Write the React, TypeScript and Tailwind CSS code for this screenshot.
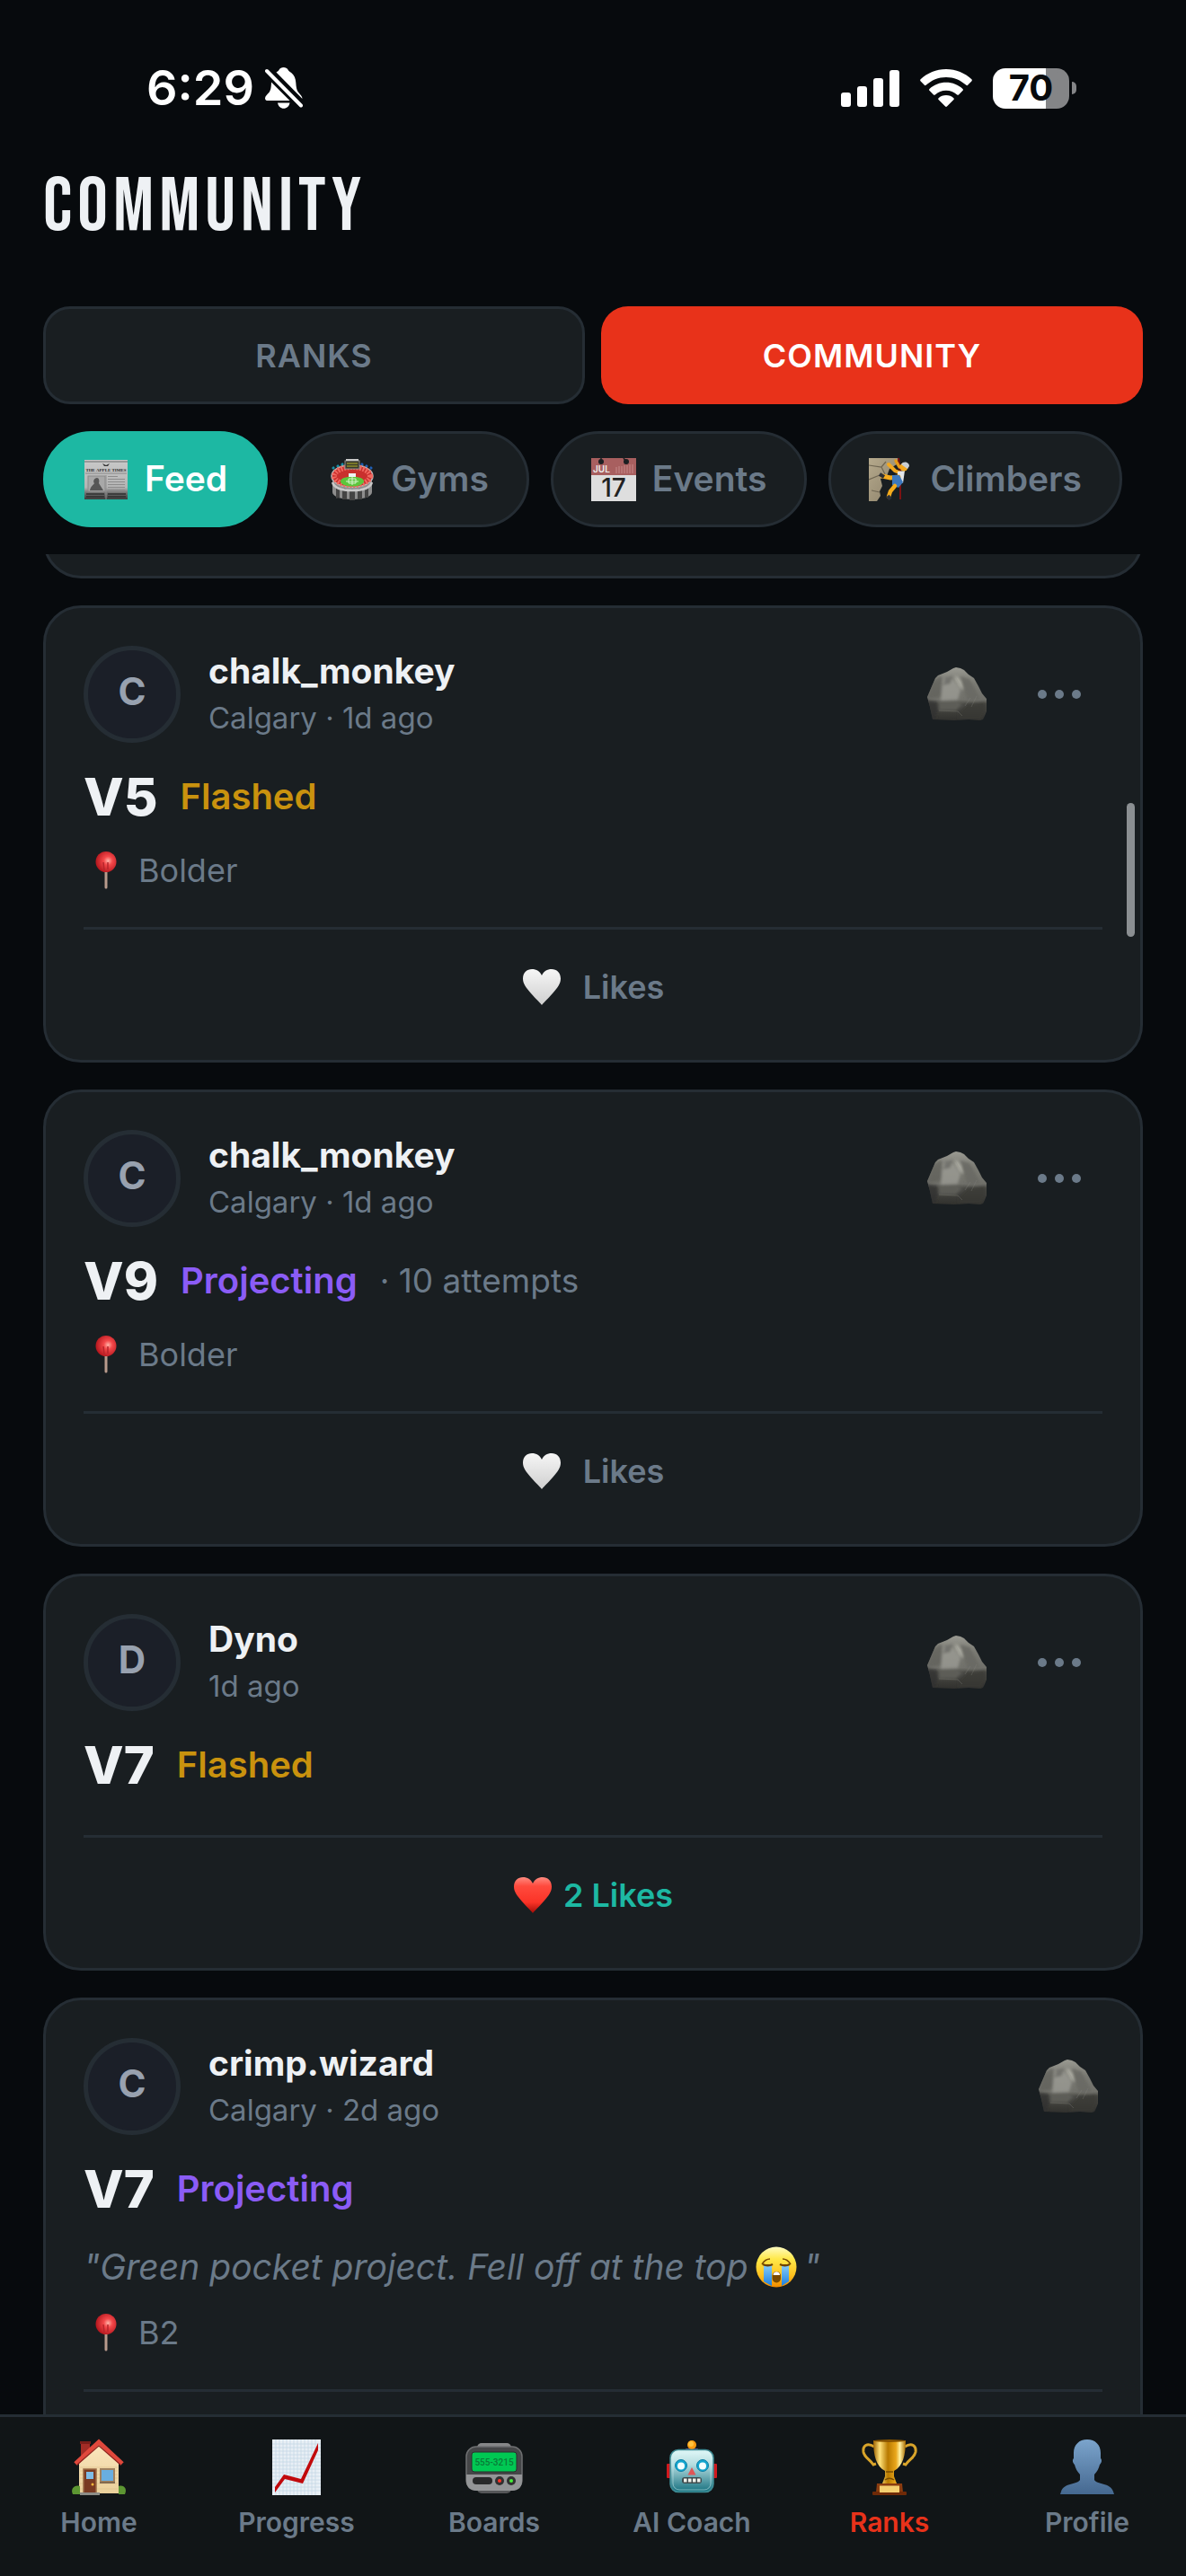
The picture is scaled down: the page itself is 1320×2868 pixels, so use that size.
import type { ReactNode } from 'react';

type Status = 'Flashed' | 'Projecting';

interface Post {
  id: number;
  user: string;
  meta: string;
  grade: string;
  status: Status;
  attempts?: number;
  note?: string;
  gym?: string;
  likes: number;
  hasMenu: boolean;
}

const posts: Post[] = [
  { id: 1, user: 'chalk_monkey', meta: 'Calgary · 1d ago', grade: 'V5', status: 'Flashed', gym: 'Bolder', likes: 0, hasMenu: true },
  { id: 2, user: 'chalk_monkey', meta: 'Calgary · 1d ago', grade: 'V9', status: 'Projecting', attempts: 10, gym: 'Bolder', likes: 0, hasMenu: true },
  { id: 3, user: 'Dyno', meta: '1d ago', grade: 'V7', status: 'Flashed', likes: 2, hasMenu: true },
  { id: 4, user: 'crimp.wizard', meta: 'Calgary · 2d ago', grade: 'V7', status: 'Projecting', note: 'Green pocket project. Fell off at the top', gym: 'B2', likes: 0, hasMenu: false },
];

/* Gradients shared by all the icons */
function IconDefs() {
  return (
    <svg className="absolute size-0" aria-hidden="true">
      <defs>
        <linearGradient id="rock" x1="0" y1="0" x2="0" y2="1">
          <stop offset="0" stopColor="#9a9a92" />
          <stop offset="0.3" stopColor="#7a7a73" />
          <stop offset="0.6" stopColor="#70706a" />
          <stop offset="0.68" stopColor="#4b4b46" />
          <stop offset="1" stopColor="#2f2f2c" />
        </linearGradient>
        <filter id="rockSoft" x="-20%" y="-20%" width="140%" height="140%">
          <feGaussianBlur stdDeviation="1.5" />
        </filter>
        <clipPath id="rockShape">
          <path d="M7 33l6-14 3-7 3-3 10-4 7-4 3-1 5 1 4 2 5 5 6 4 5 9 4 8 5 6v14l-2 5-2 4-3 1-13-1-16 1-24-1-3-14z" />
        </clipPath>
        <radialGradient id="pin" cx="0.6" cy="0.45" r="0.6">
          <stop offset="0" stopColor="#ffb3a8" />
          <stop offset="0.35" stopColor="#f4484a" />
          <stop offset="1" stopColor="#b3161d" />
        </radialGradient>
        <linearGradient id="heartWhite" x1="0" y1="0" x2="0" y2="1">
          <stop offset="0" stopColor="#f6f6f6" />
          <stop offset="1" stopColor="#cfcfcf" />
        </linearGradient>
        <linearGradient id="heartRed" x1="0" y1="0" x2="0" y2="1">
          <stop offset="0" stopColor="#ff8b80" />
          <stop offset="0.25" stopColor="#ff4a3d" />
          <stop offset="0.7" stopColor="#fb3327" />
          <stop offset="1" stopColor="#a30d08" />
        </linearGradient>
        <linearGradient id="face" x1="0" y1="0" x2="0" y2="1">
          <stop offset="0" stopColor="#fffbc0" />
          <stop offset="0.3" stopColor="#ffe94a" />
          <stop offset="0.7" stopColor="#ffc21f" />
          <stop offset="1" stopColor="#f08a00" />
        </linearGradient>
        <linearGradient id="tears" x1="0" y1="0" x2="0" y2="1">
          <stop offset="0" stopColor="#8cd0f8" />
          <stop offset="1" stopColor="#1c7fe0" />
        </linearGradient>
        <linearGradient id="robot" x1="0" y1="0" x2="0" y2="1">
          <stop offset="0" stopColor="#e2f8f8" />
          <stop offset="0.35" stopColor="#b5dde0" />
          <stop offset="1" stopColor="#16707f" />
        </linearGradient>
        <linearGradient id="gold" x1="0" y1="0" x2="1" y2="0">
          <stop offset="0" stopColor="#9c6100" />
          <stop offset="0.2" stopColor="#ffe27a" />
          <stop offset="0.45" stopColor="#b87a00" />
          <stop offset="0.7" stopColor="#eaa71b" />
          <stop offset="0.82" stopColor="#fff0a0" />
          <stop offset="1" stopColor="#a86b00" />
        </linearGradient>
        <linearGradient id="bust" x1="0" y1="0" x2="0" y2="1">
          <stop offset="0" stopColor="#7ba4cc" />
          <stop offset="1" stopColor="#456890" />
        </linearGradient>
        <linearGradient id="paper" x1="0" y1="0" x2="0" y2="1">
          <stop offset="0" stopColor="#c9c9c9" />
          <stop offset="0.7" stopColor="#b4b4b4" />
          <stop offset="0.85" stopColor="#6b6b6b" />
          <stop offset="1" stopColor="#3c3c3c" />
        </linearGradient>
        <linearGradient id="stone" x1="0" y1="0" x2="1" y2="1">
          <stop offset="0" stopColor="#b5a98c" />
          <stop offset="1" stopColor="#8b8069" />
        </linearGradient>
        <linearGradient id="wall" x1="0" y1="0" x2="0" y2="1">
          <stop offset="0" stopColor="#fbe6bd" />
          <stop offset="1" stopColor="#ead09b" />
        </linearGradient>
      </defs>
    </svg>
  );
}

function BellOffIcon() {
  return (
    <svg viewBox="0 0 42 46" className="h-[46px] w-[42px]" fill="#fff" aria-hidden="true">
      <path d="M12.500 5.500C14 4.600 15 4 15.600 2.800 16.600 1 18.400 0 20.600 0s4 1 5 2.800c.7 1.300 2 2 3.600 3.200C32.600 8.600 34 12.500 34.300 17c.3 5.200 1 8.400 2.600 10.600 2.200 2.900 4.600 4.600 4.600 7.400z" />
      <path d="M7 16.500C6.800 22 6.500 25 4.600 27.700 2.400 30.300 0 32 0 34.400 0 36 1.300 37 3.300 37h24.200z" />
      <path d="M14 39.500h13.500c-.6 3.800-3.400 6.300-6.800 6.300S14.600 43.300 14 39.500z" />
      <path d="M2 4l38 38.500" stroke="#070a0d" strokeWidth="8.500" />
      <path d="M2 4l38 38.500" stroke="#fff" strokeWidth="4" strokeLinecap="round" />
    </svg>
  );
}

function SignalIcon() {
  return (
    <svg viewBox="0 0 65 41" className="h-[41px] w-[65px]" fill="#fff" aria-hidden="true">
      <rect x="0" y="25" width="11" height="16" rx="3" />
      <rect x="18" y="18" width="11" height="23" rx="3" />
      <rect x="36" y="9" width="11" height="32" rx="3" />
      <rect x="54" y="0" width="11" height="41" rx="3" />
    </svg>
  );
}

function WifiIcon() {
  return (
    <svg viewBox="0 0 58 42" className="h-[42px] w-[58px]" fill="#fff" aria-hidden="true">
      <path d="M29 0C40 0 50 4.300 57.400 11.300c.6.600.6 1.300.1 1.900l-4.400 4.600c-.5.500-1.200.5-1.700 0C45.300 12.200 37.600 8.900 29 8.900S12.700 12.200 6.600 17.800c-.5.500-1.200.5-1.700 0L.5 13.200c-.5-.6-.5-1.300.1-1.900C8 4.300 18 0 29 0z" />
      <path d="M29 14.700c7.200 0 13.600 2.700 18.500 7.200.6.600.6 1.300.1 1.900l-4.600 4.600c-.5.500-1.200.5-1.800 0-3.300-3-7.500-4.700-12.200-4.700s-8.900 1.700-12.200 4.700c-.6.500-1.300.5-1.800 0l-4.600-4.600c-.5-.6-.5-1.300.1-1.900 4.900-4.500 11.300-7.200 18.500-7.200z" />
      <path d="M29 29c3.300 0 6.200 1.200 8.400 3.200.6.600.6 1.200 0 1.800l-7.500 7.500c-.5.500-1.300.5-1.800 0L20.600 34c-.6-.6-.6-1.200 0-1.800C22.800 30.200 25.700 29 29 29z" />
    </svg>
  );
}

function StatusBar() {
  return (
    <div className="flex h-[142px] items-center justify-between pt-[54px] pr-[122px] pl-[163px]">
      <div className="flex items-center gap-3">
        <span className="text-[54px] leading-none font-semibold text-white">6:29</span>
        <BellOffIcon />
      </div>
      <div className="flex items-center gap-[23px]">
        <SignalIcon />
        <WifiIcon />
        <div className="flex items-center gap-[3px]">
          <div className="flex h-[45px] w-[85px] items-center justify-center rounded-[14px] bg-linear-to-r from-white from-70% to-[#848587] to-70%">
            <span className="text-[40px] leading-none font-bold text-[#070a0d]">70</span>
          </div>
          <div className="h-[14px] w-[5px] rounded-r-full bg-[#848587]" />
        </div>
      </div>
    </div>
  );
}

function NewspaperIcon() {
  return (
    <svg viewBox="0 0 50 48" className="h-12 w-[50px]" aria-hidden="true">
      <rect x="1" y="2" width="48" height="44" fill="url(#paper)" />
      <path d="M1 4h48" stroke="#8a8a8a" strokeWidth="1.500" />
      <path d="M21 6l4 2 4-2-2 3h-4z" fill="#333" />
      <text x="25" y="15" fontSize="5" fontWeight="700" fontFamily="Liberation Serif, serif" textAnchor="middle" fill="#2b2b2b">THE APPLE TIMES</text>
      <path d="M2 17h46" stroke="#888" />
      <rect x="5" y="20" width="19" height="17" fill="#a8a8a8" stroke="#8a8a8a" />
      <path d="M7 36c1-5 4-6 5-8-2-2 0-6 3-6 2 0 3 3 2 6l5 8z" fill="#565656" />
      <path d="M27 20.500h11M27 23.500h19M27 26.500h19M27 29.500h19M27 32.500h19M27 35.500h19" stroke="#8c8c8c" strokeWidth="1.200" />
      <path d="M3 40h20M27 40h20M3 43h20M27 43h20" stroke="#303030" strokeWidth="1.500" />
      <path d="M25 19v27" stroke="#8f8f8f" />
    </svg>
  );
}

function StadiumIcon() {
  return (
    <svg viewBox="0 0 50 48" className="h-12 w-[50px]" aria-hidden="true">
      <path d="M3 12l2-2M8 10l2-2M13 8l2-2" stroke="#1890a8" strokeWidth="2.500" />
      <path d="M47 12l-2-2M42 10l-2-2M37 8l-2-2" stroke="#1f5fb5" strokeWidth="2.500" />
      <path d="M3 20v18c0 5 10 8 22 8s22-3 22-8V20z" fill="#8d8d8d" />
      <path d="M7 45V34c0-3 4-3 4 0v10zM14 46V36c0-3 5-3 5 0v10zM22 47V37c0-3 6-3 6 0v10zM31 46V36c0-3 5-3 5 0v10zM39 44V34c0-3 4-3 4 0v10z" fill="#444" />
      <path d="M3 27c2 6 11 9 22 9s20-3 22-9" fill="none" stroke="#c9c9c9" strokeWidth="2.500" />
      <ellipse cx="25" cy="20" rx="23" ry="12.500" fill="#c9302d" stroke="#b9b9b9" strokeWidth="1.500" />
      <ellipse cx="25" cy="20" rx="20" ry="10" fill="none" stroke="#f2685f" strokeWidth="6" strokeDasharray="2 1.500" />
      <ellipse cx="25" cy="26" rx="13" ry="5.500" fill="#5cc63c" />
      <path d="M18 26h14M25 21v9M21 23h8v5h-8z" stroke="#d6f5cc" fill="none" />
      <rect x="17" y="3" width="16" height="9" fill="#3a3a2a" stroke="#8b8b8b" />
      <path d="M19 6h12M19 9h12" stroke="#8f8c2a" strokeWidth="1.500" />
      <path d="M18 2h14" stroke="#c8c8c8" strokeWidth="2" />
      <rect x="21" y="17" width="8" height="4" fill="#eef3f3" />
    </svg>
  );
}

function CalendarIcon() {
  return (
    <svg viewBox="0 0 50 48" className="h-12 w-[50px] overflow-visible" aria-hidden="true">
      <rect width="50" height="48" fill="#dedede" />
      <rect width="50" height="19" fill="#a85f5f" />
      <circle cx="11" cy="4" r="3" fill="#1c1f22" />
      <circle cx="39" cy="4" r="3" fill="#1c1f22" />
      <path d="M11 0v4M36 0l3 4" stroke="#1c1f22" strokeWidth="1.500" />
      <text x="2" y="16" fontSize="10" fontFamily="Inter, sans-serif" fill="#eee">JUL</text>
      <path d="M28 10v7M31 9v8M34 9v8M37 8v9M40 8v9M43 7v10M46 7v10" stroke="#c78b8b" />
      <text x="25" y="43" fontSize="28" fontWeight="500" fontFamily="Inter, sans-serif" textAnchor="middle" fill="#222">17</text>
    </svg>
  );
}

function ClimberIcon() {
  return (
    <svg viewBox="0 0 50 48" className="h-12 w-[50px]" aria-hidden="true">
      <path d="M0 0h33l-2 7-8 5-3 8-7 3 2 8-3 6 1 5-4 6H0z" fill="url(#stone)" />
      <path d="M0 8l14 2 5-6M0 24l12-5M3 36l9 2M14 10l4 8" stroke="#6f6652" fill="none" strokeWidth="1.200" />
      <path d="M33 0l2 16v30" stroke="#7d1212" strokeWidth="2" fill="none" />
      <path d="M22 7l7 7 7 3" stroke="#f2a71f" strokeWidth="4" strokeLinecap="round" fill="none" />
      <path d="M30 3l4 7" stroke="#e69a18" strokeWidth="3.500" strokeLinecap="round" />
      <path d="M32 15l8-1-2 14-6-4z" fill="#e3e6ea" />
      <path d="M33 21l-9 1-9-2" stroke="#f5ab1d" strokeWidth="5" strokeLinecap="round" fill="none" />
      <path d="M26 19h8l4 8-5 6-7-3z" fill="#3d78bd" />
      <path d="M29 31l-5 6-2 6" stroke="#f5ab1d" strokeWidth="4.500" strokeLinecap="round" fill="none" />
      <path d="M12 18l5 3M21 42l3 4" stroke="#2b2f38" strokeWidth="4" />
      <circle cx="39" cy="10" r="4.500" fill="#f2a71f" />
      <path d="M36 7c2-4 9-3 9 2l-2 3z" fill="#c9ced3" />
    </svg>
  );
}

function RockIcon() {
  return (
    <svg viewBox="0 0 78 60" className="h-[60px] w-[78px] shrink-0" role="img" aria-label="Boulder">
      <g clipPath="url(#rockShape)">
        <rect width="78" height="60" fill="url(#rock)" />
        <g filter="url(#rockSoft)">
          <path d="M12 16l10-7 3 6-2 18-16 2z" fill="#5c5c56" opacity="0.600" />
          <path d="M24 14l6-4 8 6 6 9-3 11-19 1z" fill="#a0a098" opacity="0.700" />
          <path d="M27 11l8-1-2 8-8 2z" fill="#5c5c56" opacity="0.600" />
          <path d="M39 9l6 7 3 10-5-4-5-9z" fill="#b2b2a9" opacity="0.900" />
          <path d="M44 10l10 3 8 14 4 9-14 1-5-13z" fill="#686862" opacity="0.800" />
          <path d="M20 38h20l6 3-7 7H20z" fill="#63635d" opacity="0.800" />
          <path d="M6 36l12 2 1 10-3 11H9z" fill="#31312e" opacity="0.700" />
          <path d="M42 51l10-10 20-2v10l-5 9H42z" fill="#363632" opacity="0.700" />
        </g>
        <path d="M38 10l4 7 4 8M55 34l-6 9M62 32l-6 12M20 48l21 1 5 5" stroke="#8c8c83" opacity="0.300" fill="none" />
      </g>
    </svg>
  );
}

function PinIcon() {
  return (
    <svg viewBox="0 0 48 44" className="h-11 w-12" aria-hidden="true">
      <path d="M25 22v19" stroke="#b89a8c" strokeWidth="3" strokeLinecap="round" />
      <circle cx="25" cy="12.500" r="11.500" fill="url(#pin)" />
      <path d="M22 13l1 9M27 13v8" stroke="#b7252b" strokeWidth="1.500" />
    </svg>
  );
}

function HeartIcon({ liked }: { liked: boolean }) {
  return (
    <svg viewBox="0 0 44 42" className="h-[42px] w-11" aria-hidden="true">
      <path
        d="M22 41C19 37 15 34 10 28 4 21 1 17 1 11.500 1 5 5.500 1 11 1c5 0 9 2.500 11 7 2-4.500 6-7 11-7 5.500 0 10 4 10 10.500C43 17 40 21 34 28c-5 6-9 9-12 13z"
        fill={liked ? 'url(#heartRed)' : 'url(#heartWhite)'}
      />
    </svg>
  );
}

function CryingIcon() {
  return (
    <svg viewBox="0 0 46 46" className="mx-2 inline-block size-[46px] align-[-9px]" role="img" aria-label="crying">
      <circle cx="23" cy="23" r="22.500" fill="url(#face)" />
      <path d="M9 20h9v24L9 39zM29 20h8v19l-8 5z" fill="url(#tears)" />
      <path d="M7 20c3-5 6-6 9-6M39 20c-3-5-6-6-9-6" stroke="#7b4c00" strokeWidth="1.500" fill="none" />
      <path d="M8 20c3 1.500 8 1.500 11 0M27 20c3 1.500 8 1.500 11 0" stroke="#6d4200" strokeWidth="2.500" fill="none" />
      <rect x="18.500" y="28" width="9.500" height="12.500" rx="4.700" fill="#7a4a00" />
      <path d="M19.500 32c0-5 7.500-5 7.500 0z" fill="#fff" />
    </svg>
  );
}

function HouseIcon() {
  return (
    <svg viewBox="0 0 64 64" className="size-16" aria-hidden="true">
      <rect x="12" y="4" width="10" height="18" fill="#a32c26" />
      <rect x="11" y="3" width="12" height="3" fill="#7a1e1a" />
      <path d="M10 26L32 6l22 20v35H10z" fill="url(#wall)" />
      <path d="M11 32h42M11 36h42M11 40h42M11 44h42M11 50h42M11 56h42" stroke="#e0c590" strokeWidth="0.800" />
      <path d="M6 28L32 4l26 24" stroke="#e0483c" strokeWidth="5" fill="none" />
      <path d="M8 29L32 8l24 21" stroke="#8f231d" strokeWidth="1.200" fill="none" />
      <rect x="15" y="34" width="14" height="27" fill="#7a3a22" stroke="#9b6b46" strokeWidth="1.500" />
      <rect x="18" y="37" width="8" height="8" fill="#7fbce6" />
      <circle cx="25" cy="51" r="1.500" fill="#f3b63c" />
      <rect x="34" y="34" width="15" height="14" fill="#69aee0" stroke="#a08260" strokeWidth="2" />
      <path d="M33 49h17" stroke="#826a4e" strokeWidth="2" />
      <rect x="11" y="60" width="22" height="3" fill="#8d8d88" />
      <path d="M3 62c-3-6 2-11 8-9v9zM61 62c3-6-1-11-7-9v9z" fill="#5d9632" />
    </svg>
  );
}

function ChartIcon() {
  return (
    <svg viewBox="0 0 64 64" className="size-16" aria-hidden="true">
      <rect x="5" y="1" width="54" height="62" fill="#e8eff5" />
      <path
        d="M9 1v62M13 1v62M17 1v62M21 1v62M25 1v62M29 1v62M33 1v62M37 1v62M41 1v62M45 1v62M49 1v62M53 1v62M5 6h54M5 10h54M5 14h54M5 18h54M5 22h54M5 26h54M5 30h54M5 34h54M5 38h54M5 42h54M5 46h54M5 50h54M5 54h54M5 58h54"
        stroke="#c5d8e6"
        strokeWidth="0.800"
      />
      <path d="M8 60V54l10-14 19 5L56 5v8L39 50l-20-5z" fill="#c1090c" />
    </svg>
  );
}

function PagerIcon() {
  return (
    <svg viewBox="0 0 64 64" className="size-16" aria-hidden="true">
      <rect x="13" y="5" width="38" height="12" rx="5" fill="#868789" />
      <rect x="13" y="48" width="38" height="13" rx="5" fill="#555658" />
      <rect x="1" y="9" width="62" height="48" rx="11" fill="#454648" stroke="#6e6f71" strokeWidth="1.500" />
      <path d="M1 40h62v7c0 7-4 11-11 11H12C5 58 1 54 1 47z" fill="#949597" />
      <rect x="7" y="15" width="50" height="22" rx="3" fill="#00c853" stroke="#2b2c2d" />
      <text x="32" y="30" fontSize="10" fontWeight="500" fontFamily="Roboto, sans-serif" textAnchor="middle" fill="#0a7a38">555-3215</text>
      <rect x="8" y="43" width="22" height="8" rx="4" fill="#28292a" />
      <circle cx="38" cy="47" r="5" fill="#303132" />
      <circle cx="38" cy="47" r="2" fill="#ff3328" />
      <circle cx="51" cy="47" r="5" fill="#303132" />
      <circle cx="51" cy="47" r="2" fill="#45f03a" />
    </svg>
  );
}

function RobotIcon() {
  return (
    <svg viewBox="0 0 64 64" className="size-16" aria-hidden="true">
      <path d="M25 11h14l-2 5H27z" fill="#5d4a86" />
      <circle cx="32" cy="7" r="5" fill="#f99b10" />
      <circle cx="31" cy="6" r="3" fill="#ffc23e" />
      <rect x="4" y="28" width="6" height="16" rx="1" fill="#d1191e" />
      <rect x="54" y="28" width="6" height="16" rx="1" fill="#d1191e" />
      <rect x="8" y="12.500" width="48" height="47" rx="9" fill="url(#robot)" stroke="#3f8b94" strokeWidth="1.500" />
      <rect x="11" y="15" width="42" height="42" rx="7" fill="none" stroke="#d6f4f4" opacity="0.500" />
      <circle cx="20" cy="30" r="6.500" fill="#14a6cf" stroke="#0d7fa5" />
      <circle cx="44" cy="30" r="6.500" fill="#14a6cf" stroke="#0d7fa5" />
      <circle cx="20" cy="30.500" r="4" fill="#f2ffff" />
      <circle cx="44" cy="30.500" r="4" fill="#f2ffff" />
      <path d="M32 32l4.500 8.500h-9z" fill="#e05656" />
      <rect x="21" y="43" width="22" height="7" rx="3" fill="#3d4a4d" />
      <path d="M23 44.500h3.500v4H23zM28 44.500h3.500v4H28zM33 44.500h3.500v4H33zM38 44.500h3.500v4H38z" fill="#f0f0ea" />
    </svg>
  );
}

function TrophyIcon() {
  return (
    <svg viewBox="0 0 64 64" className="size-16" aria-hidden="true">
      <path d="M15 9C7 4 2 8 3 15c1 6 7 8 11 14l3-1" stroke="#d9a42a" strokeWidth="3" fill="none" />
      <path d="M49 9c8-5 13-1 12 6-1 6-7 8-11 14l-3-1" stroke="#d9a42a" strokeWidth="3" fill="none" />
      <path d="M14 2h36c0 16-3 29-13 34v6l3 8H24l3-8v-6C17 31 14 18 14 2z" fill="url(#gold)" />
      <ellipse cx="32" cy="2.500" rx="18" ry="1.500" fill="#8a5600" />
      <path d="M28 37h8M27 46c3-2 7-2 10 0" stroke="#7a4c00" strokeWidth="1.500" fill="none" />
      <path d="M18 50h28l1 10H17z" fill="#8a3c10" />
      <rect x="13" y="59" width="38" height="4" rx="1" fill="#6f2a08" />
      <rect x="21" y="52.500" width="22" height="7.500" fill="#f4cf70" />
    </svg>
  );
}

function BustIcon() {
  return (
    <svg viewBox="0 0 64 64" className="size-16" aria-hidden="true">
      <path d="M32 1c9 0 15 6 15 15v6c2 2 1 5-1 7-1 4-3 8-6 11v6c2 5 18 3 21 13l1 3H2l1-3c3-10 19-8 21-13v-6c-3-3-5-7-6-11-2-2-3-5-1-7v-6C17 7 23 1 32 1z" fill="url(#bust)" />
    </svg>
  );
}

const filters: { label: string; icon: ReactNode; active?: boolean }[] = [
  { label: 'Feed', icon: <NewspaperIcon />, active: true },
  { label: 'Gyms', icon: <StadiumIcon /> },
  { label: 'Events', icon: <CalendarIcon /> },
  { label: 'Climbers', icon: <ClimberIcon /> },
];

const navItems: { label: string; icon: ReactNode; active?: boolean }[] = [
  { label: 'Home', icon: <HouseIcon /> },
  { label: 'Progress', icon: <ChartIcon /> },
  { label: 'Boards', icon: <PagerIcon /> },
  { label: 'AI Coach', icon: <RobotIcon /> },
  { label: 'Ranks', icon: <TrophyIcon />, active: true },
  { label: 'Profile', icon: <BustIcon /> },
];

function PostCard({ post }: { post: Post }) {
  const liked = post.likes > 0;

  return (
    <article className="shrink-0 rounded-[42px] border-3 border-[#252d34] bg-[#191e21] p-[42px]">
      <div className="flex h-[108px] items-center">
        <div className="flex size-[108px] shrink-0 items-center justify-center rounded-full border-5 border-[#252d34] bg-[#1b1f28] pb-2 text-[42px] font-bold text-[#98a1af]">
          {post.user[0].toUpperCase()}
        </div>
        <div className="ml-[31px] flex-1">
          <h2 className="text-[39px] leading-[52px] font-bold text-[#eef1f4]">{post.user}</h2>
          <p className="text-[33px] leading-[52px] text-[#6b7a89]">{post.meta}</p>
        </div>
        <div className="flex items-center gap-7">
          <RockIcon />
          {post.hasMenu && (
            <button type="button" aria-label="More options" className="flex h-16 w-24 items-center justify-center gap-[9px]">
              <span className="size-[10px] rounded-full bg-[#6b7a89]" />
              <span className="size-[10px] rounded-full bg-[#6b7a89]" />
              <span className="size-[10px] rounded-full bg-[#6b7a89]" />
            </button>
          )}
        </div>
      </div>

      <div className="mt-6 flex h-[72px] items-center gap-[25px]">
        <span className="text-[58px] leading-none font-extrabold text-[#eef1f4]">{post.grade}</span>
        <span className={post.status === 'Flashed' ? 'text-[40px] font-semibold text-[#c9920e]' : 'text-[40px] font-semibold text-[#8b5cf6]'}>
          {post.status}
        </span>
        {post.attempts && <span className="text-[37px] text-[#6b7a89]">· {post.attempts} attempts</span>}
      </div>

      {post.note && (
        <p className="mt-6 text-[39px] leading-[54px] text-[#6b7a89] italic">
          "{post.note}
          <CryingIcon />"
        </p>
      )}

      {post.gym && (
        <div className="mt-6 flex h-[43px] items-center gap-[13px] text-[36px] text-[#6b7a89]">
          <PinIcon />
          {post.gym}
        </div>
      )}

      <div className="mt-[42px] border-t-3 border-[#252d34] pt-6">
        <button
          type="button"
          className={
            liked
              ? 'flex h-[79px] w-full items-center justify-center gap-3 text-[36px] font-semibold text-[#1db8a3]'
              : 'flex h-[79px] w-full items-center justify-center gap-6 text-[36px] font-semibold text-[#6b7a89]'
          }
        >
          <HeartIcon liked={liked} />
          {liked ? `${post.likes} Likes` : 'Likes'}
        </button>
      </div>
    </article>
  );
}

export default function App() {
  return (
    <div className="flex h-screen w-full flex-col overflow-hidden bg-[#070a0d] font-['Inter','Liberation_Sans',sans-serif]">
      <IconDefs />
      <StatusBar />

      <header className="px-12">
        <h1 className="mt-[47px] font-['Bebas_Neue','Roboto_Condensed','Liberation_Sans_Narrow','Roboto',sans-serif] text-[84px] leading-[84px] font-normal tracking-[6px] text-[#eef1f4]">
          COMMUNITY
        </h1>

        <div className="mt-[68px] grid grid-cols-2 gap-[18px]">
          <button type="button" className="h-[109px] rounded-[30px] border-3 border-[#252d34] bg-[#191e21] text-[36px] font-semibold tracking-[1px] text-[#6b7a89]">
            RANKS
          </button>
          <button type="button" className="h-[109px] rounded-[30px] bg-[#e8321a] text-[36px] font-semibold tracking-[1px] text-white">
            COMMUNITY
          </button>
        </div>

        <div className="mt-[30px] flex gap-6">
          {filters.map((filter) => (
            <button
              key={filter.label}
              type="button"
              className={
                filter.active
                  ? 'flex h-[107px] items-center gap-[18px] rounded-full border-3 border-[#1db8a3] bg-[#1db8a3] px-[42px] text-[39px] font-semibold text-white'
                  : 'flex h-[107px] items-center gap-[18px] rounded-full border-3 border-[#252d34] bg-[#191e21] px-[42px] text-[39px] font-semibold text-[#6b7a89]'
              }
            >
              {filter.icon}
              {filter.label}
            </button>
          ))}
        </div>
      </header>

      <div className="relative mt-[30px] flex min-h-0 flex-1 flex-col">
        <main className="flex min-h-0 flex-1 flex-col gap-[30px] overflow-y-auto px-12 [scrollbar-width:none]">
          {/* Tail of the post scrolled off the top */}
          <div className="flex h-[27px] shrink-0 flex-col justify-end overflow-hidden">
            <div className="h-24 shrink-0 rounded-[42px] border-3 border-[#252d34] bg-[#191e21]" />
          </div>
          {posts.map((post) => (
            <PostCard key={post.id} post={post} />
          ))}
        </main>
        <div className="absolute top-[277px] right-[57px] h-[149px] w-[9px] rounded-full bg-[#8b8f92]" />
      </div>

      <nav className="grid h-[180px] shrink-0 grid-cols-6 border-t-3 border-[#252d34] bg-[#111517]">
        {navItems.map((item) => (
          <a
            key={item.label}
            href="#"
            className={
              item.active
                ? 'flex flex-col items-center pt-6 text-[30px] font-semibold text-[#e8321a]'
                : 'flex flex-col items-center pt-6 text-[30px] font-semibold text-[#6b7a89]'
            }
          >
            {item.icon}
            <span className="mt-[9px] leading-10">{item.label}</span>
          </a>
        ))}
      </nav>
    </div>
  );
}
